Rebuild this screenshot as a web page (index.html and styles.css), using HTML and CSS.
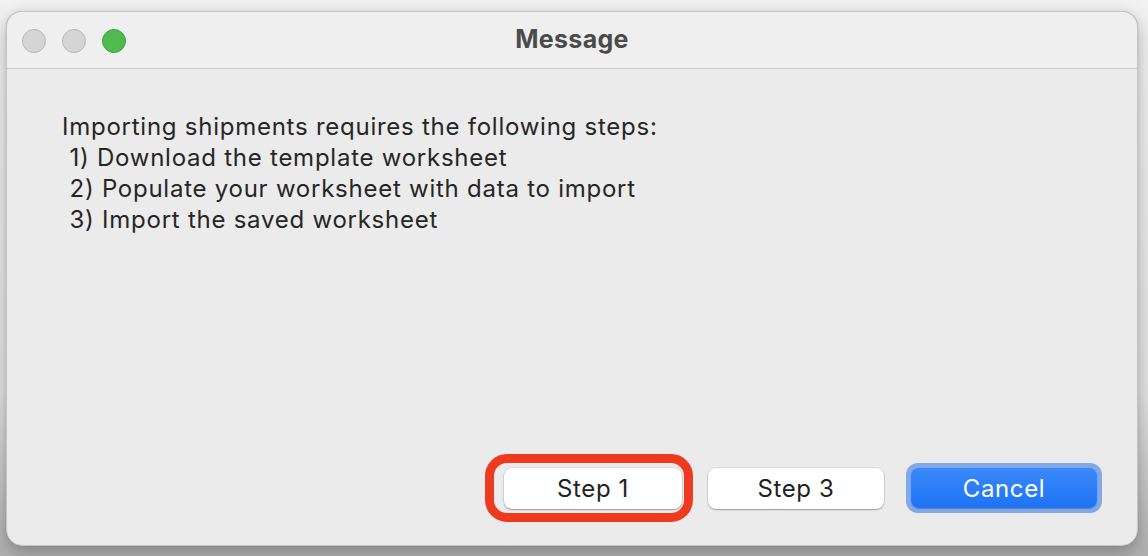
FILE: index.html
```html
<!DOCTYPE html>
<html>
<head>
<meta charset="utf-8">
<link rel="stylesheet" href="styles.css">
</head>
<body>
<div class="window">
  <div class="titlebar">
    <div class="lights">
      <span class="light gray"></span>
      <span class="light gray"></span>
      <span class="light green"></span>
    </div>
    <div class="title">Message</div>
  </div>
  <div class="content">
    <div class="message">
      <div>Importing shipments requires the following steps:</div>
      <div>&nbsp;1) Download the template worksheet</div>
      <div>&nbsp;2) Populate your worksheet with data to import</div>
      <div>&nbsp;3) Import the saved worksheet</div>
    </div>
    <div class="actions">
      <span class="highlight"><button class="btn">Step 1</button></span>
      <button class="btn narrow">Step 3</button>
      <span class="focus"><button class="btn primary">Cancel</button></span>
    </div>
  </div>
</div>
</body>
</html>
```
FILE: styles.css
```css
html, body {
  margin: 0;
  padding: 0;
}
body {
  width: 1148px;
  height: 556px;
  overflow: hidden;
  background: linear-gradient(180deg, #f2f2f2 0%, #e4e4e4 70%, #b0b0b0 100%);
  font-family: Inter, "Noto Sans", "Liberation Sans", sans-serif;
  padding: 11px 10px 0 6px;
  box-sizing: border-box;
}
.window {
  width: 1132px;
  height: 535px;
  background: #ebebeb;
  border-radius: 16px;
  border: 1px solid #c4c4c4;
  box-sizing: border-box;
  box-shadow: 0 6px 18px rgba(0,0,0,0.28), 0 0 1px rgba(0,0,0,0.3);
  display: flex;
  flex-direction: column;
  overflow: hidden;
}
.titlebar {
  height: 57px;
  flex: none;
  box-sizing: border-box;
  background: #efefef;
  border-bottom: 1px solid #c9c9c9;
  display: flex;
  align-items: center;
  position: relative;
}
.lights {
  display: flex;
  gap: 16px;
  padding-left: 15px;
  padding-top: 1px;
}
.light {
  width: 24px;
  height: 24px;
  border-radius: 50%;
  box-sizing: border-box;
}
.light.gray {
  background: #d5d5d5;
  border: 1px solid #b9b9b9;
}
.light.green {
  background: #4fbb4e;
  border: 1px solid #3ea43e;
}
.title {
  position: absolute;
  left: 0;
  right: 0;
  top: 0;
  bottom: 2px;
  display: flex;
  align-items: center;
  justify-content: center;
  font-weight: 700;
  font-size: 25px;
  letter-spacing: 0.3px;
  color: #4b4b4b;
  padding-left: 0;
}
.content {
  flex: 1;
  display: flex;
  flex-direction: column;
  padding: 42px 35px 32px 55px;
}
.message {
  flex: 1;
  font-size: 24px;
  line-height: 31px;
  letter-spacing: 0.75px;
  color: #262626;
}
.actions {
  display: flex;
  justify-content: flex-end;
  align-items: center;
  gap: 26px;
}
.btn {
  font-family: inherit;
  font-size: 24px;
  letter-spacing: 0.6px;
  color: #222;
  background: #fff;
  border: none;
  border-radius: 8px;
  height: 41px;
  width: 178px;
  box-shadow: 0 1px 1.5px rgba(0,0,0,0.3), 0 0 0 0.5px rgba(0,0,0,0.12);
  padding: 0;
  display: block;
}
.btn.narrow {
  width: 176px;
}
.highlight {
  position: relative;
  display: block;
}
.highlight::after {
  content: "";
  position: absolute;
  left: -19px;
  right: -11px;
  top: -14px;
  bottom: -13px;
  border: 9px solid #ef3a22;
  border-radius: 22px;
}
.focus {
  display: block;
  padding: 5px;
  border-radius: 12px;
  background: #80a8eb;
  margin-left: -4px;
}
.btn.primary {
  width: 186px;
  height: 40px;
  color: #fff;
  background: linear-gradient(180deg, #3a89f8 0%, #1f73f5 100%);
  box-shadow: 0 0.5px 1px rgba(0,0,0,0.25);
}
```
